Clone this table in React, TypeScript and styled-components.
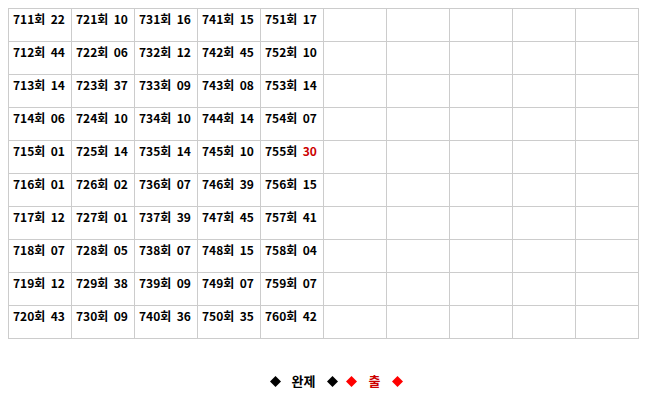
import React from "react";
import styled, { createGlobalStyle } from "styled-components";

const GlobalStyle = createGlobalStyle`
  body {
    margin: 8px;
    background: #fff;
    font-family: "Noto Sans CJK KR", "Noto Sans", sans-serif;
  }
`;

const Board = styled("table")`
  border-collapse: collapse;
  table-layout: fixed;
  width: 631px;
`;

const Cell = styled("td")`
  width: 62px;
  height: 33px;
  padding: 2px 0 0 4px;
  border: 1px solid #cccccc;
  vertical-align: top;
  font-size: 12px;
  font-weight: bold;
  line-height: 16px;
  color: #000;
  white-space: nowrap;
  box-sizing: border-box;
`;

const Hit = styled("span")<{ $last?: boolean }>`
  color: ${(p) => (p.$last ? "#cc0000" : "inherit")};
`;

const Legend = styled("div")`
  margin-top: 34px;
  padding-left: 18px;
  display: flex;
  justify-content: center;
  align-items: center;
  font-size: 13px;
  font-weight: bold;
  line-height: 16px;
`;

const Label = styled("span")<{ $red?: boolean }>`
  color: ${(p) => (p.$red ? "#cc0000" : "#000")};
  margin: 0 12px 0 11px;
`;

const Gap = styled("span")`
  display: inline-block;
  width: 8px;
`;

const Diamond: React.FC<{ red?: boolean }> = ({ red }) => (
  <svg width="11" height="11" viewBox="0 0 11 11">
    <polygon points="5.5,0 11,5.5 5.5,11 0,5.5" fill={red ? "#ff0000" : "#000"} />
  </svg>
);

const columns: [number, string][][] = [
  [[711, "22"], [712, "44"], [713, "14"], [714, "06"], [715, "01"], [716, "01"], [717, "12"], [718, "07"], [719, "12"], [720, "43"]],
  [[721, "10"], [722, "06"], [723, "37"], [724, "10"], [725, "14"], [726, "02"], [727, "01"], [728, "05"], [729, "38"], [730, "09"]],
  [[731, "16"], [732, "12"], [733, "09"], [734, "10"], [735, "14"], [736, "07"], [737, "39"], [738, "07"], [739, "09"], [740, "36"]],
  [[741, "15"], [742, "45"], [743, "08"], [744, "14"], [745, "10"], [746, "39"], [747, "45"], [748, "15"], [749, "07"], [750, "35"]],
  [[751, "17"], [752, "10"], [753, "14"], [754, "07"], [755, "30"], [756, "15"], [757, "41"], [758, "04"], [759, "07"], [760, "42"]],
];

const App: React.FC = () => {
  const rows = Array.from({ length: 10 }, (_, r) => r);
  return (
    <>
      <GlobalStyle />
      <Board>
        <tbody>
          {rows.map((r) => (
            <tr key={r}>
              {Array.from({ length: 10 }, (_, c) => {
                const item = columns[c] ? columns[c][r] : null;
                return (
                  <Cell key={c}>
                    {item && (
                      <>
                        {item[0]}회&nbsp; <Hit $last={item[0] === 755}>{item[1]}</Hit>
                      </>
                    )}
                  </Cell>
                );
              })}
            </tr>
          ))}
        </tbody>
      </Board>
      <Legend>
        <Diamond />
        <Label>완제</Label>
        <Diamond />
        <Gap />
        <Diamond red />
        <Label $red>출</Label>
        <Diamond red />
      </Legend>
    </>
  );
};

export default App;
